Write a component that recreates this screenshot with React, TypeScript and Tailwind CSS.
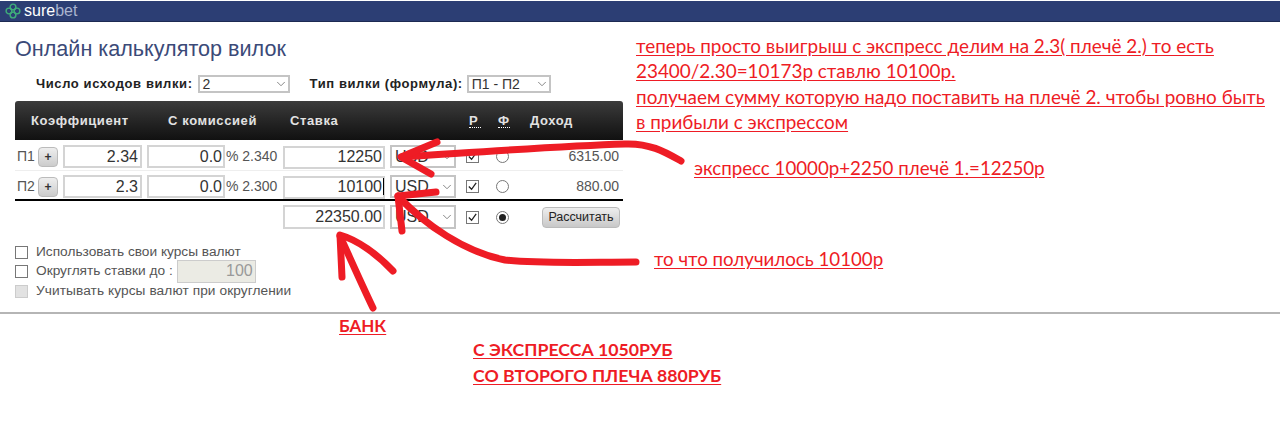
import { ChevronDown } from "lucide-react";

const Select = ({ value, className }: { value: string; className: string }) => (
  <div className={`relative flex items-center border-2 border-[#c4c4c4] bg-white pl-[3px] text-[#333] ${className}`}>
    <span>{value}</span>
    <ChevronDown className="absolute right-[0px] w-[14px] h-[14px] text-[#777]" strokeWidth={1.5} />
  </div>
);

const Check = ({ checked = false, disabled = false }: { checked?: boolean; disabled?: boolean }) => (
  <span
    className={`flex items-center justify-center w-[13px] h-[13px] border shrink-0 ${
      disabled ? "border-[#ccc] bg-[#e2e2e2]" : "border-[#777] bg-white"
    }`}
  >
    {checked && (
      <svg viewBox="0 0 12 12" className="w-[11px] h-[11px]">
        <path d="M2 6l3 3 5-7" fill="none" stroke="#222" strokeWidth="1.4" />
      </svg>
    )}
  </span>
);

const Radio = ({ checked = false }: { checked?: boolean }) => (
  <span className="flex items-center justify-center w-[13px] h-[13px] rounded-full border border-[#777] bg-white shrink-0">
    {checked && <span className="w-[7px] h-[7px] rounded-full bg-[#222]" />}
  </span>
);

const NumInput = ({ value, className }: { value: string; className: string }) => (
  <input
    readOnly
    value={value}
    className={`h-full border-2 border-[#d4d4d4] bg-white text-right pr-[1px] text-[16px] text-[#333] outline-none ${className}`}
  />
);

const OddsRow = ({
  name,
  odds,
  net,
  stake,
  income,
  caret,
}: {
  name: string;
  odds: string;
  net: string;
  stake: string;
  income: string;
  caret?: boolean;
}) => (
  <div className="flex items-center h-[23px]">
    <span className="w-[23px] pl-[2px] text-[14px] text-[#555]">{name}</span>
    <button className="w-[20px] h-[20px] rounded-[4px] border border-[#bbb] bg-gradient-to-b from-[#eee] to-[#ccc] text-[12px] leading-none font-bold text-[#333]">
      +
    </button>
    <NumInput value={odds} className="w-[79px] ml-[5px] !pr-[2px]" />
    <NumInput value="0.0" className="w-[78px] ml-[5px]" />
    <span className="w-[58px] pl-[1px] text-[14px] text-[#555] whitespace-pre">{`% ${net}`}</span>
    <div className="relative h-full">
      <NumInput value={stake} className="w-[102px]" />
      {caret && <span className="absolute right-[1px] top-[3px] w-[1px] h-[17px] bg-black" />}
    </div>
    <Select value="USD" className="w-[66px] h-full ml-[5px] text-[16px]" />
    <div className="ml-[10px]">
      <Check checked />
    </div>
    <div className="ml-[17px]">
      <Radio />
    </div>
    <span className="flex-1 text-right pr-[4px] text-[14px] text-[#555]">{income}</span>
  </div>
);

const Annotations = () => (
  <div className="absolute inset-0 pointer-events-none font-['Lato','Noto_Sans',sans-serif] text-[#ee1c25]">
    <div className="absolute left-[636px] top-[33px] w-[640px] text-[18.9px] leading-[25.3px] whitespace-nowrap underline underline-offset-2">
      <p>теперь просто выигрыш с экспресс делим на 2.3( плечё 2.) то есть</p>
      <p>23400/2.30=10173р ставлю 10100р.</p>
      <p>получаем сумму которую надо поставить на плечё 2. чтобы ровно быть</p>
      <p>в прибыли с экспрессом</p>
    </div>
    <p className="absolute left-[694px] top-[156px] text-[18.7px] leading-[25px] underline underline-offset-2">
      экспресс 10000р+2250 плечё 1.=12250р
    </p>
    <p className="absolute left-[654px] top-[247px] text-[18.7px] leading-[25px] underline underline-offset-2">
      то что получилось 10100р
    </p>
    <p className="absolute left-[339px] top-[314px] text-[17px] leading-[24px] font-bold underline underline-offset-2">БАНК</p>
    <div className="absolute left-[473px] top-[337px] text-[17.7px] leading-[26px] font-bold underline underline-offset-2">
      <p>С ЭКСПРЕССА 1050РУБ</p>
      <p>СО ВТОРОГО ПЛЕЧА 880РУБ</p>
    </div>
    <svg className="absolute inset-0 w-full h-full" viewBox="0 0 1280 440" fill="none" stroke="#ee1c25" strokeWidth="7" strokeLinecap="round" strokeLinejoin="round">
      <path d="M681 161C665 152 650 143 625 144C560 146 480 152 402 157" />
      <path d="M437 142L401 157L431 174" />
      <path d="M636 262C590 262 540 264 505 260C465 252 425 225 398 196" />
      <path d="M436 192L398 196L402 231" />
      <path d="M373 308C362 285 350 258 340 236" />
      <path d="M342 277L340 235C358 240 378 255 393 271" />
    </svg>
  </div>
);

export default function App() {
  return (
    <div className="relative w-[1280px] h-[440px] bg-white overflow-hidden font-['Liberation_Sans',sans-serif]">
      <div className="pt-[1px] h-[314px] border-b-2 border-[#b5b5b5]">
        <div className="flex items-center h-[21px] bg-[#2c3e74] pl-[5px] border-b border-[#1d2a52]">
          <svg viewBox="0 0 20 20" className="w-[16px] h-[16px]" fill="none" stroke="#3fae7a" strokeWidth="1.8">
            <circle cx="10" cy="5" r="3.6" />
            <circle cx="15" cy="10" r="3.6" />
            <circle cx="10" cy="15" r="3.6" />
            <circle cx="5" cy="10" r="3.6" />
          </svg>
          <span className="ml-[3px] text-[16px] text-white">
            sure<span className="text-[#a9b4cf]">bet</span>
          </span>
        </div>
        <div className="w-[624px] pl-[15px] pr-[1px]">
          <h1 className="mt-[14px] text-[21.6px] leading-[26px] text-[#3b4a78]">Онлайн калькулятор вилок</h1>
          <div className="flex items-center h-[18px] mt-[13px] pl-[21px] text-[13px] font-bold tracking-[0.6px] text-[#222]">
            <span>Число исходов вилки:</span>
            <Select value="2" className="w-[92px] h-full ml-[5px] font-normal text-[14px] tracking-normal border" />
            <span className="ml-[20px]">Тип вилки (формула):</span>
            <Select value="П1 - П2" className="w-[84px] h-full ml-[4px] font-normal text-[14px] tracking-normal border" />
          </div>
          <div className="flex items-center h-[39px] mt-[8px] rounded-t-[3px] bg-gradient-to-b from-[#3c3c3c] to-[#111] text-[13px] font-bold tracking-[0.6px] text-[#e2e2e2]">
            <span className="w-[153px] pl-[16px]">Коэффициент</span>
            <span className="w-[122px]">С комиссией</span>
            <span className="w-[179px]">Ставка</span>
            <span className="w-[12px] border-b border-dotted border-white leading-[13px]">Р</span>
            <span className="ml-[17px] w-[12px] border-b border-dotted border-white leading-[13px]">Ф</span>
            <span className="ml-[20px]">Доход</span>
          </div>
          <div className="pt-[5px] border-b border-[#eee] pb-[2px]">
            <OddsRow name="П1" odds="2.34" net="2.340" stake="12250" income="6315.00" />
          </div>
          <div className="pt-[4px] pb-[1px] border-b-2 border-black">
            <OddsRow name="П2" odds="2.3" net="2.300" stake="10100" income="880.00" caret />
          </div>
          <div className="flex items-center h-[24px] mt-[4px] pl-[268px]">
            <NumInput value="22350.00" className="w-[102px]" />
            <Select value="USD" className="w-[66px] h-full ml-[5px] text-[16px]" />
            <div className="ml-[10px]">
              <Check checked />
            </div>
            <div className="ml-[17px]">
              <Radio checked />
            </div>
            <button className="ml-[33px] w-[78px] h-[21px] rounded-[4px] border border-[#bbb] bg-gradient-to-b from-[#eee] to-[#c8c8c8] text-[12.5px] text-[#222]">
              Рассчитать
            </button>
          </div>
          <div className="mt-[16px] text-[13.7px] text-[#555] flex flex-col">
            <label className="flex items-center gap-[8px] h-[14px]">
              <Check />
              <span>Использовать свои курсы валют</span>
            </label>
            <label className="flex items-center gap-[8px] h-[24px]">
              <Check />
              <span>Округлять ставки до :</span>
              <input
                readOnly
                value="100"
                className="w-[79px] h-[23px] ml-[-4px] border border-[#ccc] bg-[#ebebe4] text-right pr-[2px] text-[16px] text-[#999] outline-none"
              />
            </label>
            <label className="flex items-center gap-[8px] h-[14px] mt-[1px] tracking-[0.08px]">
              <Check disabled />
              <span>Учитывать курсы валют при округлении</span>
            </label>
          </div>
        </div>
      </div>
      <Annotations />
    </div>
  );
}
